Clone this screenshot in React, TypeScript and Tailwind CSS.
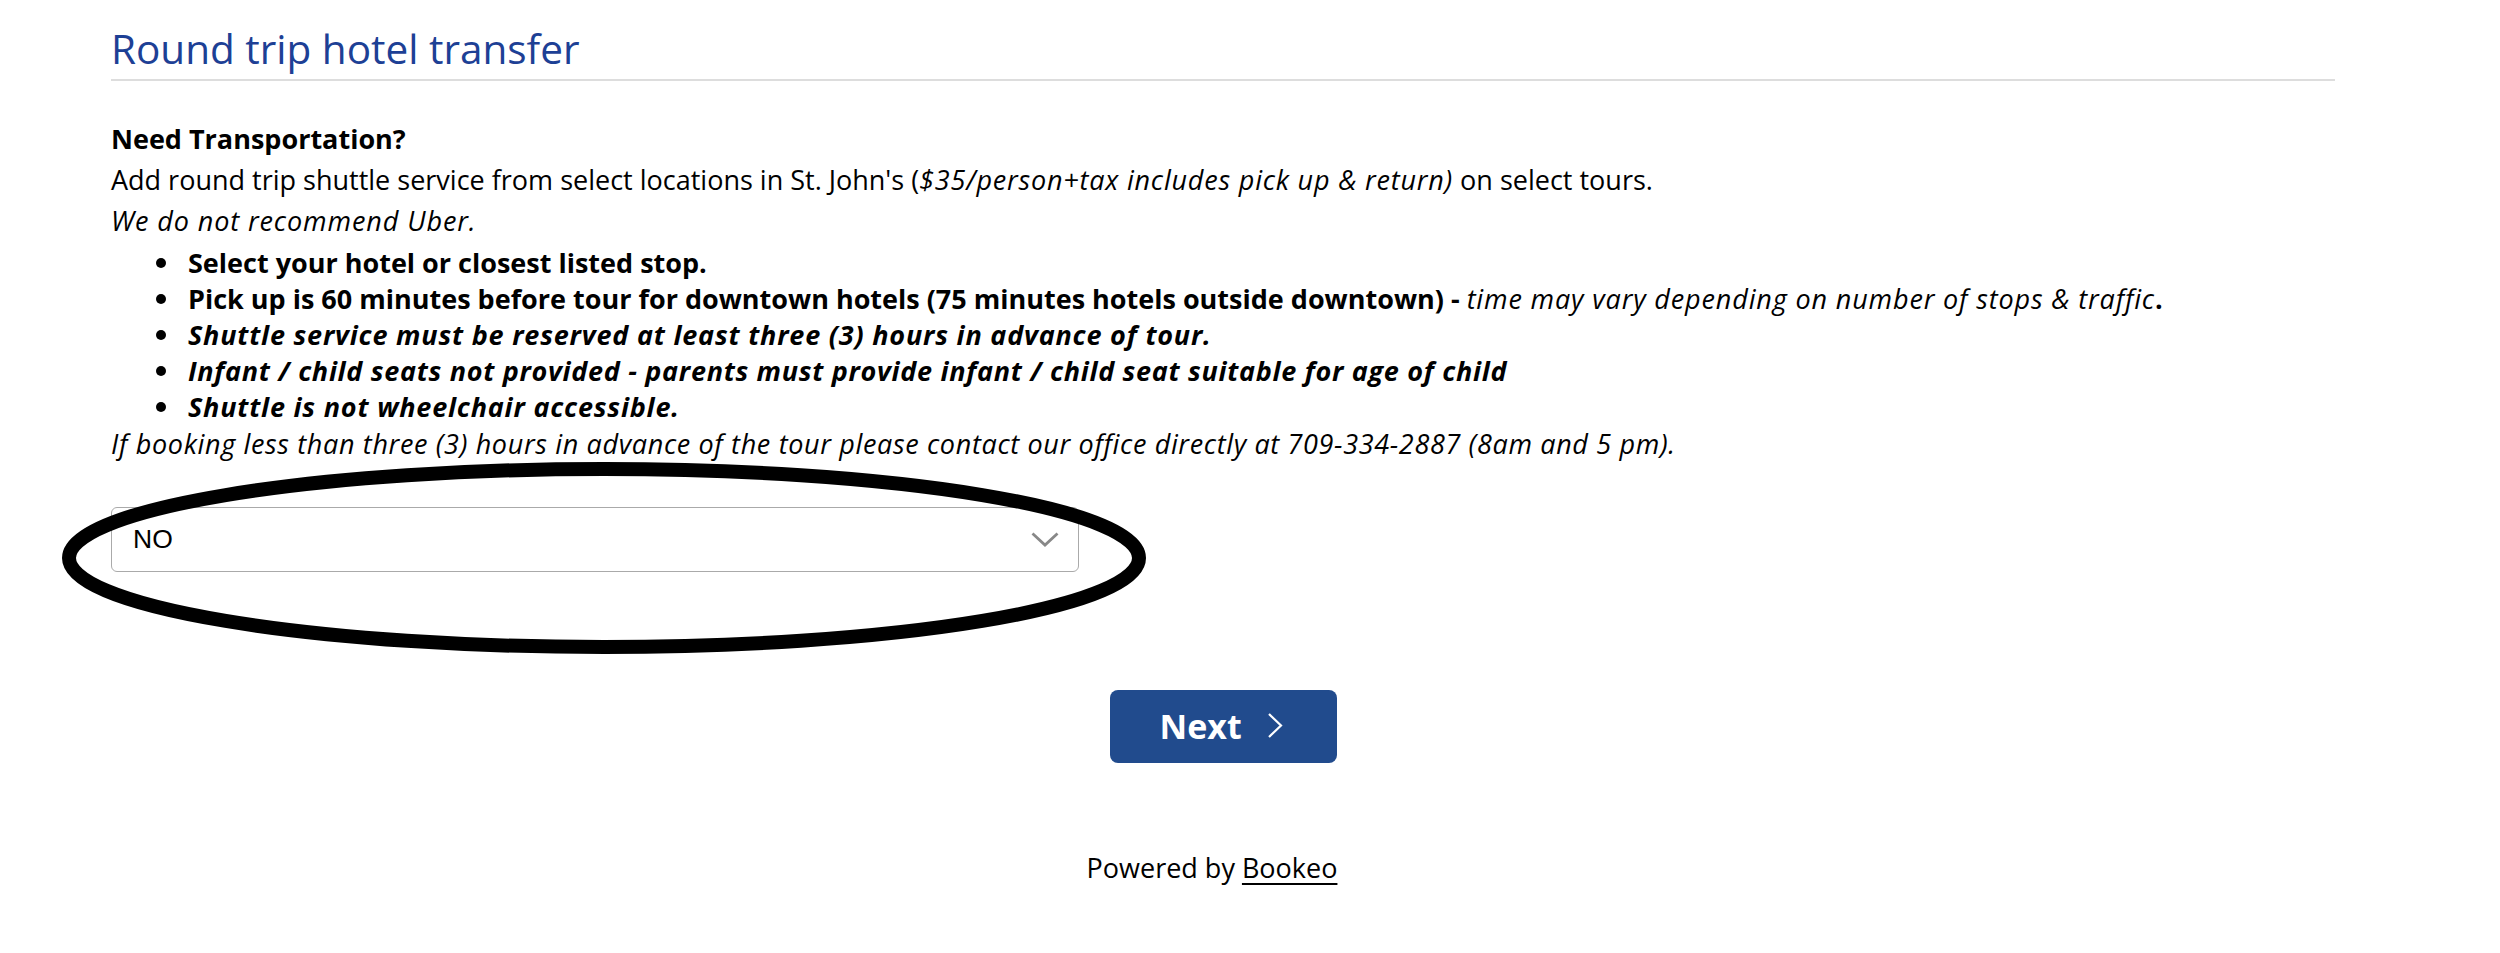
const font = { fontFamily: '"Open Sans", "Liberation Sans", sans-serif' }

const rules = [
  { text: 'Shuttle service must be reserved at least three (3) hours in advance of tour.', track: 'tracking-[0.8px]' },
  {
    text: 'Infant / child seats not provided - parents must provide infant / child seat suitable for age of child',
    track: 'tracking-[0.7px]',
  },
  { text: 'Shuttle is not wheelchair accessible.', track: 'tracking-[0.8px]' },
]

function Bullet() {
  return (
    <span className="flex w-[77px] shrink-0 justify-end pr-[22px]">
      <span className="mt-[13px] size-[10px] rounded-full bg-black" />
    </span>
  )
}

export default function App() {
  return (
    <div className="relative min-h-[953px] w-[2500px] bg-white text-black" style={font}>
      <div className="ml-[111px] w-[2224px] pt-[24px]">
        <h1 className="border-b-2 border-[#dddddd] pb-[5px] text-[40.5px] leading-[50px] font-normal text-[#1d4095]">
          Round trip hotel transfer
        </h1>

        <div className="mt-[37px] text-[27px]">
          <p className="leading-[41px] font-bold">Need Transportation?</p>
          <p className="leading-[41px]">
            Add round trip shuttle service from select locations in St. John's (
            <i className="tracking-[0.8px]">$35/person+tax includes pick up &amp; return)</i> on select tours.
          </p>
          <p className="leading-[41px] tracking-[0.9px] italic">We do not recommend Uber.</p>

          <ul className="mt-1 leading-[36px] font-bold">
            <li className="flex">
              <Bullet />
              <span>Select your hotel or closest listed stop.</span>
            </li>
            <li className="flex">
              <Bullet />
              <span>
                Pick up is 60 minutes before tour for downtown hotels (75 minutes hotels outside downtown) -{' '}
                <span className="font-normal tracking-[0.85px] italic">
                  time may vary depending on number of stops &amp; traffic
                </span>
                .
              </span>
            </li>
            {rules.map((r) => (
              <li key={r.text} className="flex">
                <Bullet />
                <span className={`${r.track} italic`}>{r.text}</span>
              </li>
            ))}
          </ul>

          <p className="leading-[37px] tracking-[0.65px] italic">
            If booking less than three (3) hours in advance of the tour please contact our office directly at
            709-334-2887 (8am and 5 pm).
          </p>
        </div>

        <div className="mt-[45px] flex h-[65px] w-[968px] items-center justify-between rounded-[6px] border-[1.5px] border-[#aaaaaa] pr-[19px] pl-[21px]">
          <span className="text-[26.5px]" style={{ fontFamily: '"Liberation Sans", Arial, sans-serif' }}>
            NO
          </span>
          <svg width="28" height="15" viewBox="0 0 28 15" fill="none">
            <path d="M1.5 1.5 L14 13 L26.5 1.5" stroke="#888888" strokeWidth="2.8" />
          </svg>
        </div>

        <div className="mt-[118px] flex justify-center">
          <button className="flex h-[73px] w-[227px] items-center gap-[25px] rounded-[8px] bg-[#214b8d] pl-[50px] text-[34px] font-bold text-white">
            <span>Next</span>
            <svg width="16" height="27" viewBox="0 0 16 27" fill="none" className="mt-[-2px]">
              <path d="M2 2 L14 13.5 L2 25" stroke="white" strokeWidth="2.2" />
            </svg>
          </button>
        </div>

        <p className="mt-[86px] pr-[22px] text-center text-[27px] leading-[37px]">
          Powered by <span className="underline underline-offset-[5px]">Bookeo</span>
        </p>
      </div>

      {/* annotation ring drawn over the select */}
      <svg className="pointer-events-none absolute top-[461px] left-[62px]" width="1084" height="194" viewBox="0 0 1084 194">
        <ellipse cx="542" cy="97" rx="535" ry="89" fill="none" stroke="black" strokeWidth="14" />
      </svg>
    </div>
  )
}
